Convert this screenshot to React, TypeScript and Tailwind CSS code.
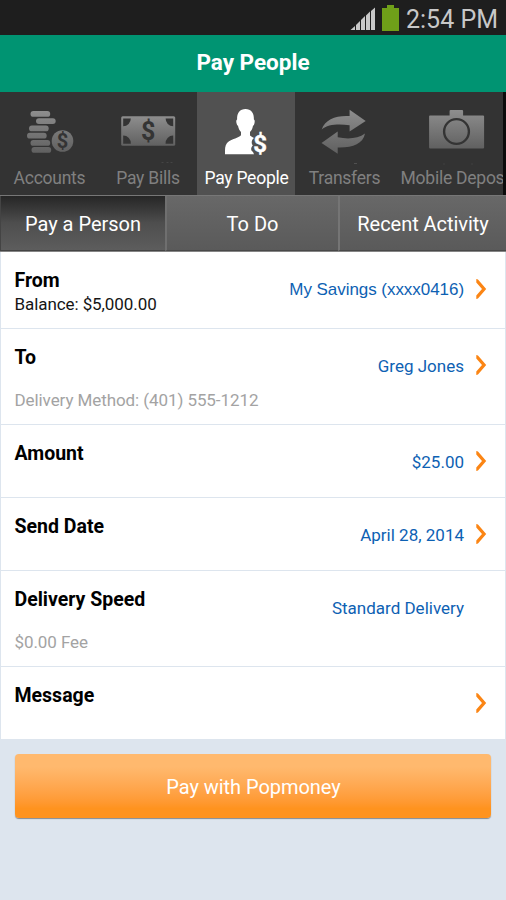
import type { ReactNode } from "react";

function Gradient({ id, top, bottom }: { id: string; top: number; bottom: number }) {
  return (
    <linearGradient id={id} gradientUnits="userSpaceOnUse" x1="0" x2="0" y1={top} y2={bottom}>
      <stop offset="0" stopColor="#8e8e8e" />
      <stop offset="1" stopColor="#606060" />
    </linearGradient>
  );
}

function AccountsIcon() {
  const coins = [[30.5, 26], [36, 33.2], [29, 40.5], [27, 47.8], [30.5, 55], [31.5, 62]];
  return (
    <svg width="98" height="75" viewBox="0 7 98 75" className="block">
      <defs><Gradient id="coins" top={26} bottom={68} /></defs>
      {coins.map(([x, y]) => (
        <rect key={y} x={x} y={y} width="19.7" height="5.8" rx="2.9" fill="url(#coins)" />
      ))}
      <circle cx="62.5" cy="56" r="10.8" fill="url(#coins)" />
      <text x="62.5" y="63" textAnchor="middle" fontSize="20" fontWeight="700" fill="#343434">$</text>
    </svg>
  );
}

function BillsIcon() {
  return (
    <svg width="98" height="75" viewBox="98.5 7 98 75" className="block">
      <defs><Gradient id="bill" top={31} bottom={61} /></defs>
      <rect x="120.7" y="31.3" width="54" height="29.5" rx="1.5" fill="url(#bill)" />
      <g fill="#343434">
        <path d="M122.700 33.500h7.600a7.600 7.600 0 0 1-7.600 7.700z" />
        <path d="M172.700 33.500h-7.600a7.600 7.600 0 0 0 7.600 7.700z" />
        <path d="M122.700 58.700h7.600a7.600 7.600 0 0 0-7.600-8.200z" />
        <path d="M172.700 58.700h-7.600a7.600 7.600 0 0 1 7.600-8.200z" />
      </g>
      <text x="147.7" y="55" textAnchor="middle" fontSize="25" fontWeight="700" fill="#343434">$</text>
      <path d="M161 77.500h2M166 77.500h2M170 77.500h2" stroke="#454545" />
    </svg>
  );
}

function PersonIcon() {
  return (
    <svg width="98" height="75" viewBox="197 7 98 75" className="block">
      <path
        d="M245.500 24C240 24 236.800 28 237.100 34.500c-1 .2-1 2.200-.5 4 .3 1.200.8 2 1.400 2.200.6 3 1.500 4.800 3 6.300v3.200c-2.800 2.800-8.500 3.700-12 6-3.200 2.200-4 5.300-4 9.300V69.300h29l-1-2.300c-2.500-1.500-2.300-4.500-.2-6.500-1.800-2.500-1.200-5.700 1.200-7.500-1.700-.8-3-1.600-4-2.500v-3.500c1.500-1.500 2.500-3.300 3-6.300.7-.2 1.100-1 1.400-2.200.5-1.800.5-3.800-.5-4 .3-6.500-3-10.500-8.400-10.500z"
        fill="#fff"
      />
      <text x="260.200" y="67" textAnchor="middle" fontSize="24" fontWeight="700" fill="#fff" stroke="#fff" strokeWidth=".4">$</text>
    </svg>
  );
}

function TransfersIcon() {
  return (
    <svg width="98" height="75" viewBox="295 7 98 75" className="block">
      <defs><Gradient id="arrows" top={25} bottom={68} /></defs>
      <g fill="url(#arrows)">
        <path d="M321.700 44.500C325 34.500 336 30.200 349.600 31v-6.200L365.700 36l-16.100 10.400v-6.100c-11-1.500-22-1-27.900 4.200z" />
        <path d="M365 48.500c-2 10.500-13 14.500-27.300 14v6.200L321.500 58l16.200-11.500v5.800c10 2 20.500 1.500 27.300-3.800z" />
      </g>
      <path d="M354 78.500h3" stroke="#505050" />
    </svg>
  );
}

function CameraIcon() {
  return (
    <svg width="110" height="75" viewBox="393 7 110 75" className="block self-start">
      <defs><Gradient id="camera" top={25} bottom={64} /></defs>
      <path d="M430 30.500h19.600V26q0-1 1-1h11.500q1 0 1 1v4.500h20q1 0 1 1v31q0 1-1 1h-53q-1 0-1-1v-31q0-1 .9-1z" fill="url(#camera)" />
      <circle cx="456.500" cy="46.500" r="12.400" fill="none" stroke="#343434" strokeWidth="2.400" />
      <path d="M443 79h2M471 79h2" stroke="#404040" />
    </svg>
  );
}

function NavItem({ icon, label, size, active }: { icon: ReactNode; label: string; size: string; active?: boolean }) {
  return (
    <div className={`flex h-[104px] shrink-0 flex-col items-center ${size} ${active ? "bg-[#515151] text-white" : "text-[#808080]"}`}>
      {icon}
      <span className="whitespace-nowrap pl-px text-[17.500px] leading-[22px] tracking-[-0.25px]">{label}</span>
    </div>
  );
}

function Chevron() {
  return (
    <svg width="12" height="20" viewBox="0 0 12 20" className="block">
      <path d="M.3 0Q1.500 0 2.200.8L10.200 10 2.200 19.200Q1.500 20 .3 20v-3.500L6 10 .3 3.500z" fill="#fb8514" />
    </svg>
  );
}

function Row({ title, detail, detailStyle, value, valueStyle, size, chevron = true, valueTop }: {
  title: string; detail?: string; detailStyle?: string; value?: string; valueStyle?: string;
  size: string; chevron?: boolean; valueTop: string;
}) {
  return (
    <div className={`flex justify-between border-x border-b border-[#dde5ee] bg-white pl-[13.500px] ${size}`}>
      <div className="flex flex-col pt-[17px]">
        <span className="text-[19.500px] font-bold leading-[23px] text-black">{title}</span>
        {detail && <span className={`text-[17px] leading-6 tracking-[-0.08px] ${detailStyle}`}>{detail}</span>}
      </div>
      <div className={`flex h-6 items-center ${valueTop}`}>
        <span className={`text-[17px] leading-6 text-[#0d61b3] ${valueStyle ?? ""}`}>{value}</span>
        <div className="ml-[12px] w-[29px] pb-[2px]">{chevron && <Chevron />}</div>
      </div>
    </div>
  );
}

export default function App() {
  return (
    <div className="flex h-[900px] w-[506px] flex-col overflow-hidden bg-[#dde5ee] font-[Roboto,'Liberation_Sans',sans-serif]">
      <div className="flex h-[35px] items-center justify-end bg-[#1e1e1e] pr-[8px] text-[#c8c8c8]">
        <svg width="55" height="35" viewBox="0 0 55 35">
          <path d="M.5 30 5 26V30zM6 25l4-4v9H6zM11 20l4-4v14h-4zM16 15.500l4-4V30h-4zM21 11l4-3.500V30h-4z" fill="#c8c8c8" />
          <path d="M32 8h5V5h7v3h5v23H32z" fill="#6f9f19" />
        </svg>
        <span className="ml-px pt-[5px] text-[25px] leading-8">2:54 PM</span>
      </div>
      <div className="flex h-[57px] items-center justify-center bg-[#009472] pb-px text-[22.500px] font-bold text-white">Pay People</div>
      <div className="flex h-[103px] w-full overflow-hidden border-r-[3px] border-[#0c0c0c] bg-[#333]">
        <NavItem icon={<AccountsIcon />} label="Accounts" size="w-[98px]" />
        <NavItem icon={<BillsIcon />} label="Pay Bills" size="w-[99px]" />
        <NavItem icon={<PersonIcon />} label="Pay People" size="w-[98px]" active />
        <NavItem icon={<TransfersIcon />} label="Transfers" size="w-[98px]" />
        <NavItem icon={<CameraIcon />} label="Mobile Depos" size="w-[118px]" />
      </div>
      <div className="flex h-[57px] border-y border-t-[#777] border-b-[#858585] text-[20px] text-white">
        <div className="flex w-[165px] items-center justify-center border-b border-l border-[#444] bg-linear-to-b from-[#262626] via-[#4e4e4e] to-[#5d5d5d] pt-px">Pay a Person</div>
        <div className="flex w-[173px] items-center justify-center border-b border-l-2 border-[#484848] border-l-[#6f6f6f] bg-linear-to-b from-[#686868] to-[#5a5a5a] pt-px">To Do</div>
        <div className="flex w-[168px] items-center justify-center border-b border-l-2 border-[#484848] border-l-[#757575] bg-linear-to-b from-[#686868] to-[#5a5a5a] pt-px"><span className="tracking-[-0.05px]">Recent Activity</span></div>
      </div>
      <Row title="From" detail="Balance: $5,000.00" detailStyle="text-[#151515]" value="My Savings (xxxx0416)" valueStyle="font-['Liberation_Sans',sans-serif] tracking-[-0.05px]" size="h-[77px]" valueTop="mt-[26px]" />
      <Row title="To" detail="Delivery Method: (401) 555-1212" detailStyle="mt-[19px] text-[#a3a3a3]" value="Greg Jones" size="h-[96px]" valueTop="mt-[25px]" />
      <Row title="Amount" value="$25.00" size="h-[73px]" valueTop="mt-[25px]" />
      <Row title="Send Date" value="April 28, 2014" size="h-[73px]" valueTop="mt-[25px]" />
      <Row title="Delivery Speed" detail="$0.00 Fee" detailStyle="mt-[19px] text-[#a3a3a3]" value="Standard Delivery" size="h-[96px]" valueTop="mt-[25px]" chevron={false} />
      <Row title="Message" size="h-[73px]" valueTop="mt-[25px]" />
      <button className="mx-[15px] mt-[14px] h-[64px] rounded-[4px] bg-linear-to-b from-[#ffb96e] from-20% to-[#ff931e] to-85% pl-px pt-px text-[20px] tracking-[-0.05px] text-white shadow-[0_1px_1px_#858a91]">Pay with Popmoney</button>
    </div>
  );
}
